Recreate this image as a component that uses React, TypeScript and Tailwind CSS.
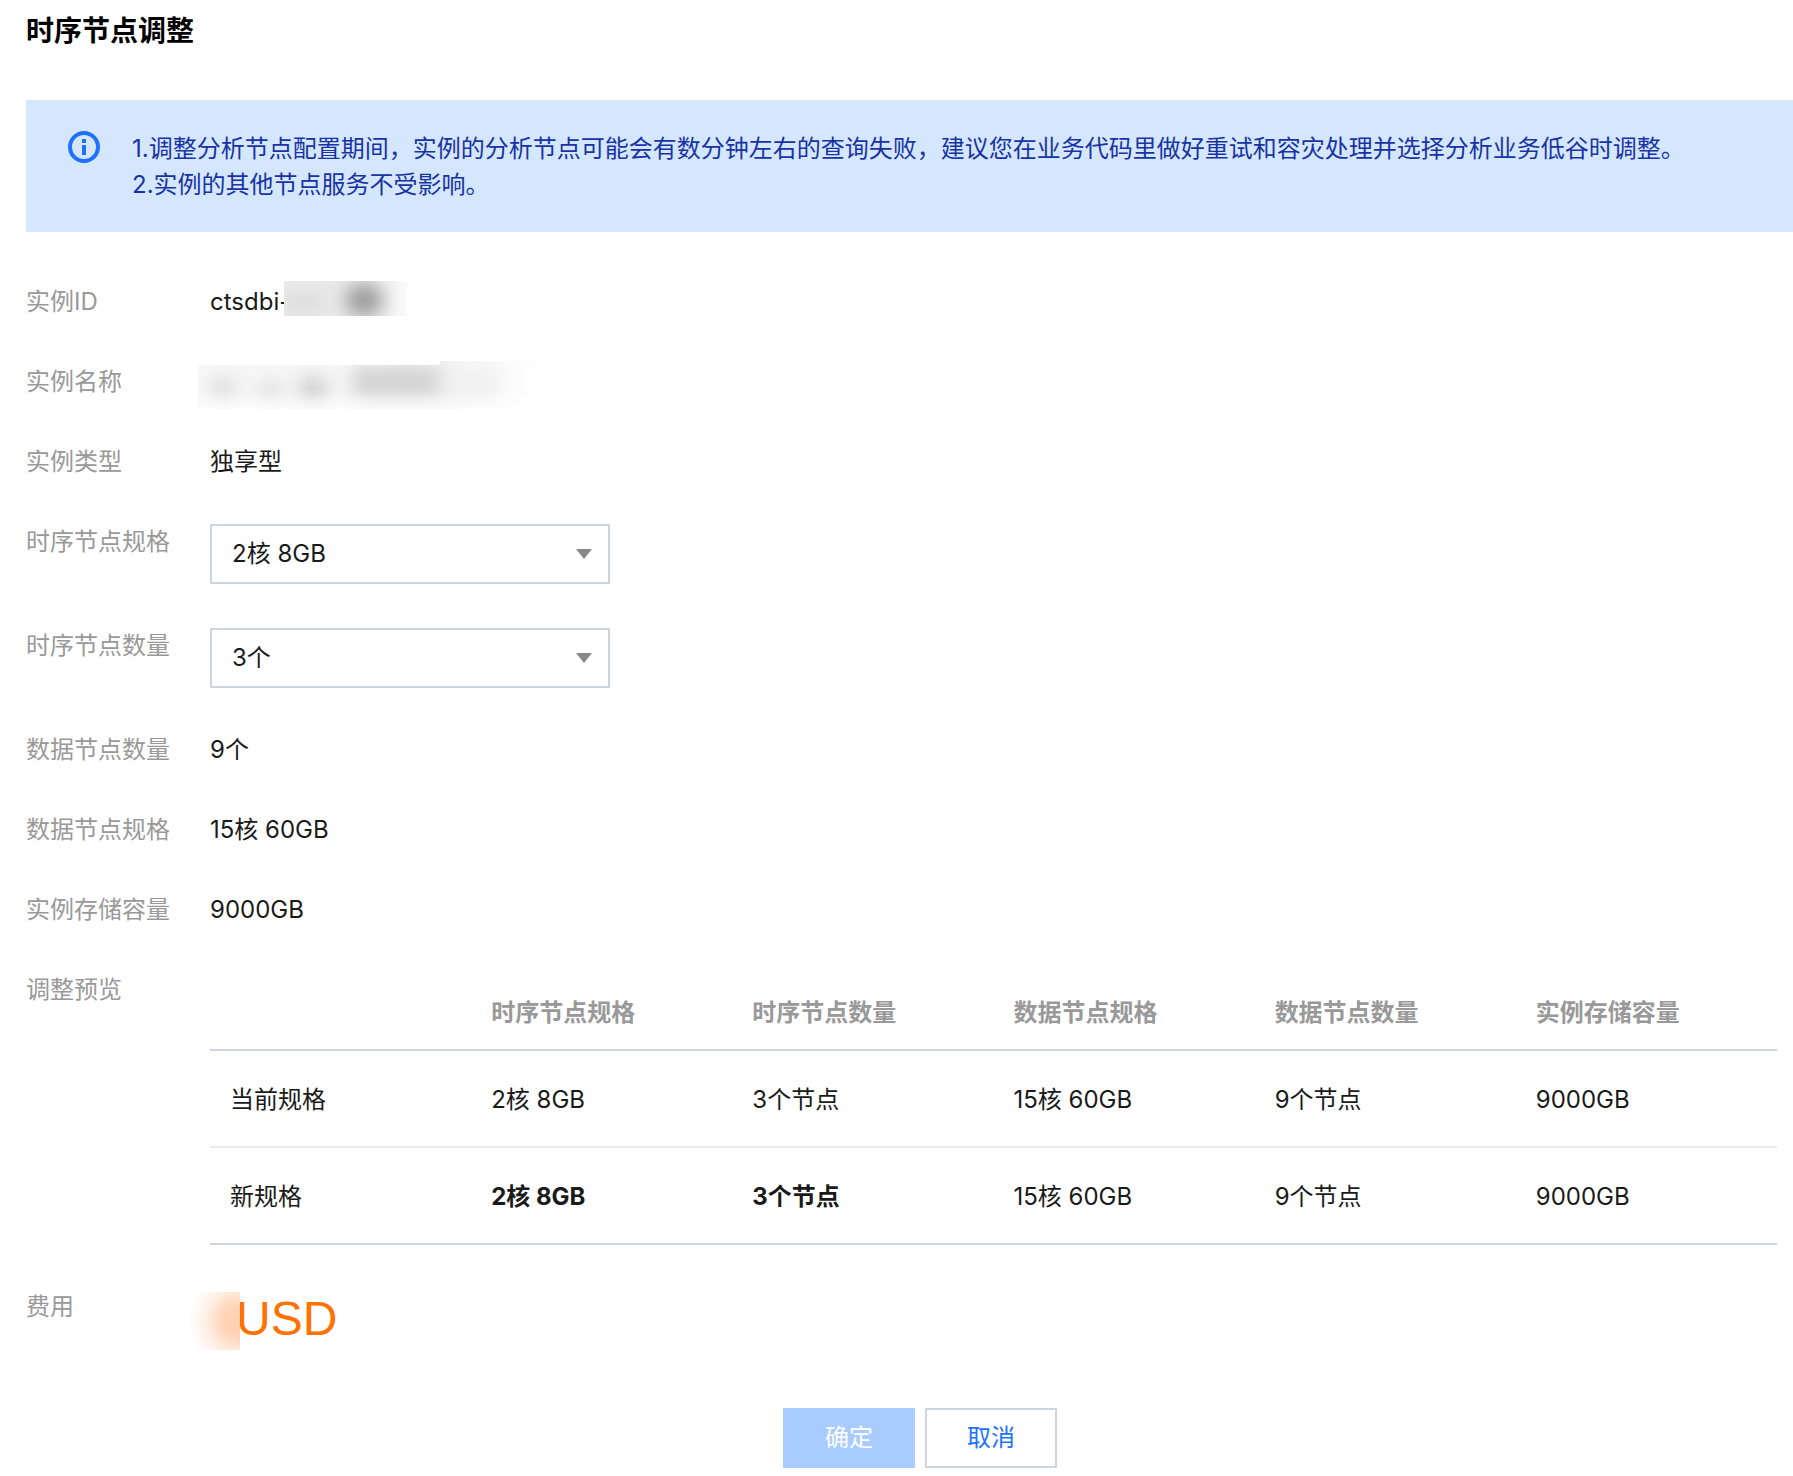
import React, { useState } from 'react';

const SPEC_OPTIONS = ['2核 8GB', '4核 16GB', '8核 32GB'];
const COUNT_OPTIONS = ['3个', '5个', '7个'];

const COLUMNS = ['时序节点规格', '时序节点数量', '数据节点规格', '数据节点数量', '实例存储容量'];

interface FieldProps {
  label: string;
  htmlFor?: string;
  children: React.ReactNode;
}

const Field: React.FC<FieldProps> = ({ label, htmlFor, children }) => (
  <div className="flex items-start">
    {htmlFor ? (
      <label htmlFor={htmlFor} className="w-46 shrink-0 text-[#999]">
        {label}
      </label>
    ) : (
      <span className="w-46 shrink-0 text-[#999]">{label}</span>
    )}
    <div className="min-w-0 flex-1">{children}</div>
  </div>
);

interface SelectProps {
  id: string;
  value: string;
  options: string[];
  onChange: (value: string) => void;
}

const Select: React.FC<SelectProps> = ({ id, value, options, onChange }) => (
  <div className="relative w-full max-w-[400px]">
    <select
      id={id}
      value={value}
      onChange={e => onChange(e.target.value)}
      className="h-15 w-full appearance-none border-2 border-[#cfd5de] bg-white pl-5 pr-12 text-[#1a1a1a] outline-none focus:border-[#006eff]"
    >
      {options.map(o => (
        <option key={o}>{o}</option>
      ))}
    </select>
    <svg
      className="pointer-events-none absolute right-[18px] top-1/2 h-[10px] w-4 -translate-y-1/2"
      viewBox="0 0 16 10"
      fill="#888"
    >
      <path d="M0 0h16L8 10z" />
    </svg>
  </div>
);

const InfoIcon = () => (
  <svg className="size-8 shrink-0" viewBox="0 0 32 32" fill="none">
    <circle cx="16" cy="16" r="14" stroke="#1f72ff" strokeWidth="4" />
    <path d="M14 8h4v4h-4zM14 14h4v10h-4z" fill="#1f72ff" />
  </svg>
);

// Masks drawn over the private values
const IdMask = () => (
  <svg className="absolute -top-[3px] left-[74px] h-[35px] w-[123px]" viewBox="0 0 123 35">
    <defs>
      <linearGradient id="id-base" x1="0" x2="1">
        <stop offset="0" stopColor="#ebebeb" />
        <stop offset="0.7" stopColor="#e8e8e8" />
        <stop offset="1" stopColor="#fbfbfb" />
      </linearGradient>
      <filter
        id="id-blur"
        filterUnits="userSpaceOnUse"
        x="-40"
        y="-40"
        width="203"
        height="115"
        colorInterpolationFilters="sRGB"
      >
        <feGaussianBlur stdDeviation="9" />
      </filter>
    </defs>
    <path fill="url(#id-base)" d="M0 0h123v35H0z" />
    <g filter="url(#id-blur)">
      <ellipse cx="18" cy="22" rx="24" ry="7" fill="#d6d6d6" />
      <ellipse cx="80" cy="19" rx="19" ry="16" fill="#9c9c9c" />
    </g>
  </svg>
);

const NameMask = () => (
  <svg className="absolute -left-3 -top-[3px] h-12 w-[350px]" viewBox="0 0 350 48">
    <defs>
      <linearGradient id="name-base" x1="0" x2="1">
        <stop offset="0" stopColor="#f8f8f8" />
        <stop offset="0.7" stopColor="#f5f5f5" />
        <stop offset="1" stopColor="#fff" />
      </linearGradient>
      <linearGradient id="name-fade" x1="0" x2="0" y1="0" y2="1">
        <stop offset="0.6" stopColor="#fff" stopOpacity="0" />
        <stop offset="1" stopColor="#fff" stopOpacity="0.6" />
      </linearGradient>
      <filter
        id="name-blur"
        filterUnits="userSpaceOnUse"
        x="-40"
        y="-40"
        width="430"
        height="128"
        colorInterpolationFilters="sRGB"
      >
        <feGaussianBlur stdDeviation="9" />
      </filter>
      <clipPath id="name-clip">
        <path d="M0 4h242V0h108v48H0z" />
      </clipPath>
    </defs>
    <g clipPath="url(#name-clip)">
      <path fill="url(#name-base)" d="M0 0h350v48H0z" />
      <g filter="url(#name-blur)">
        <ellipse cx="25" cy="27" rx="14" ry="12" fill="#dedede" />
        <ellipse cx="72" cy="29" rx="14" ry="10" fill="#e0e0e0" />
        <ellipse cx="115" cy="28" rx="15" ry="13" fill="#cecece" />
        <rect x="154" y="4" width="96" height="34" rx="8" fill="#d4d4d4" />
        <rect x="240" y="8" width="60" height="30" rx="8" fill="#f0f0f0" />
      </g>
      <path fill="url(#name-fade)" d="M0 0h350v48H0z" />
    </g>
  </svg>
);

const PriceMask = () => (
  <svg className="absolute -left-6 top-[3px] h-[58px] w-[54px]" viewBox="0 0 54 58">
    <defs>
      <radialGradient id="price" cx="0.95" cy="0.5" r="0.9">
        <stop offset="0" stopColor="#ffcfad" />
        <stop offset="0.3" stopColor="#ffd5b8" />
        <stop offset="0.65" stopColor="#fff0e6" />
        <stop offset="1" stopColor="#fff" />
      </radialGradient>
    </defs>
    <path fill="url(#price)" d="M0 0h54v58H0z" />
  </svg>
);

export default function App() {
  const [spec, setSpec] = useState('2核 8GB');
  const [count, setCount] = useState('3个');

  const rows = [
    { name: '当前规格', cells: ['2核 8GB', '3个节点', '15核 60GB', '9个节点', '9000GB'], changed: false },
    { name: '新规格', cells: [spec, `${count}节点`, '15核 60GB', '9个节点', '9000GB'], changed: true },
  ];

  return (
    <div className="min-h-screen bg-white pb-2 pl-[26px] pt-[11px] font-['Inter','Noto_Sans_CJK_SC',sans-serif] text-2xl leading-9 text-[#1a1a1a]">
      <h1 className="text-[28px] font-semibold leading-10 text-black">时序节点调整</h1>

      {/* Notice */}
      <div className="mt-[49px] flex items-start gap-8 bg-[#d5e7ff] pb-[29px] pl-[42px] pr-4 pt-[31px] text-[#1833a3]">
        <InfoIcon />
        <div>
          <p>1.调整分析节点配置期间，实例的分析节点可能会有数分钟左右的查询失败，建议您在业务代码里做好重试和容灾处理并选择分析业务低谷时调整。</p>
          <p>2.实例的其他节点服务不受影响。</p>
        </div>
      </div>

      {/* Form */}
      <div className="mt-13 flex flex-col gap-11 pr-4">
        <Field label="实例ID">
          <div className="relative h-9">
            ctsdbi-
            <IdMask />
          </div>
        </Field>
        <Field label="实例名称">
          <div className="relative h-9">
            <NameMask />
          </div>
        </Field>
        <Field label="实例类型">独享型</Field>
        <Field label="时序节点规格" htmlFor="node-spec">
          <Select id="node-spec" value={spec} options={SPEC_OPTIONS} onChange={setSpec} />
        </Field>
        <Field label="时序节点数量" htmlFor="node-count">
          <Select id="node-count" value={count} options={COUNT_OPTIONS} onChange={setCount} />
        </Field>
        <Field label="数据节点数量">9个</Field>
        <Field label="数据节点规格">15核 60GB</Field>
        <Field label="实例存储容量">9000GB</Field>
        <Field label="调整预览">
          <table className="w-full table-fixed border-collapse text-left">
            <thead>
              <tr className="h-[78px] border-b-2 border-[#cfd5de] text-[#999]">
                <td className="px-5" />
                {COLUMNS.map(c => (
                  <th key={c} scope="col" className="px-5 pt-1 font-semibold">
                    {c}
                  </th>
                ))}
              </tr>
            </thead>
            <tbody>
              {rows.map(row => (
                <tr
                  key={row.name}
                  className={`h-[97px] border-b-2 ${row.changed ? 'border-[#cfd5de]' : 'border-[#e7eaef]'}`}
                >
                  <th scope="row" className="px-5 pt-[2px] font-normal">
                    {row.name}
                  </th>
                  {row.cells.map((cell, i) => (
                    <td key={i} className={`px-5 pt-[2px] ${row.changed && i < 2 ? 'font-bold' : ''}`}>
                      {cell}
                    </td>
                  ))}
                </tr>
              ))}
            </tbody>
          </table>
        </Field>
        <Field label="费用">
          <div className="relative h-15 pl-[26px] font-['Liberation_Sans',Arial,sans-serif] text-5xl leading-15 text-[#ff7200]">
            USD
            <PriceMask />
          </div>
        </Field>
      </div>

      {/* Actions */}
      <div className="mt-[59px] flex justify-center gap-[10px] pl-[21px]">
        <button type="button" disabled className="h-15 w-33 bg-[#a8ccff] text-white">
          确定
        </button>
        <button type="button" className="h-15 w-33 border-2 border-[#cfd5de] bg-white text-[#1f72ff]">
          取消
        </button>
      </div>
    </div>
  );
}
